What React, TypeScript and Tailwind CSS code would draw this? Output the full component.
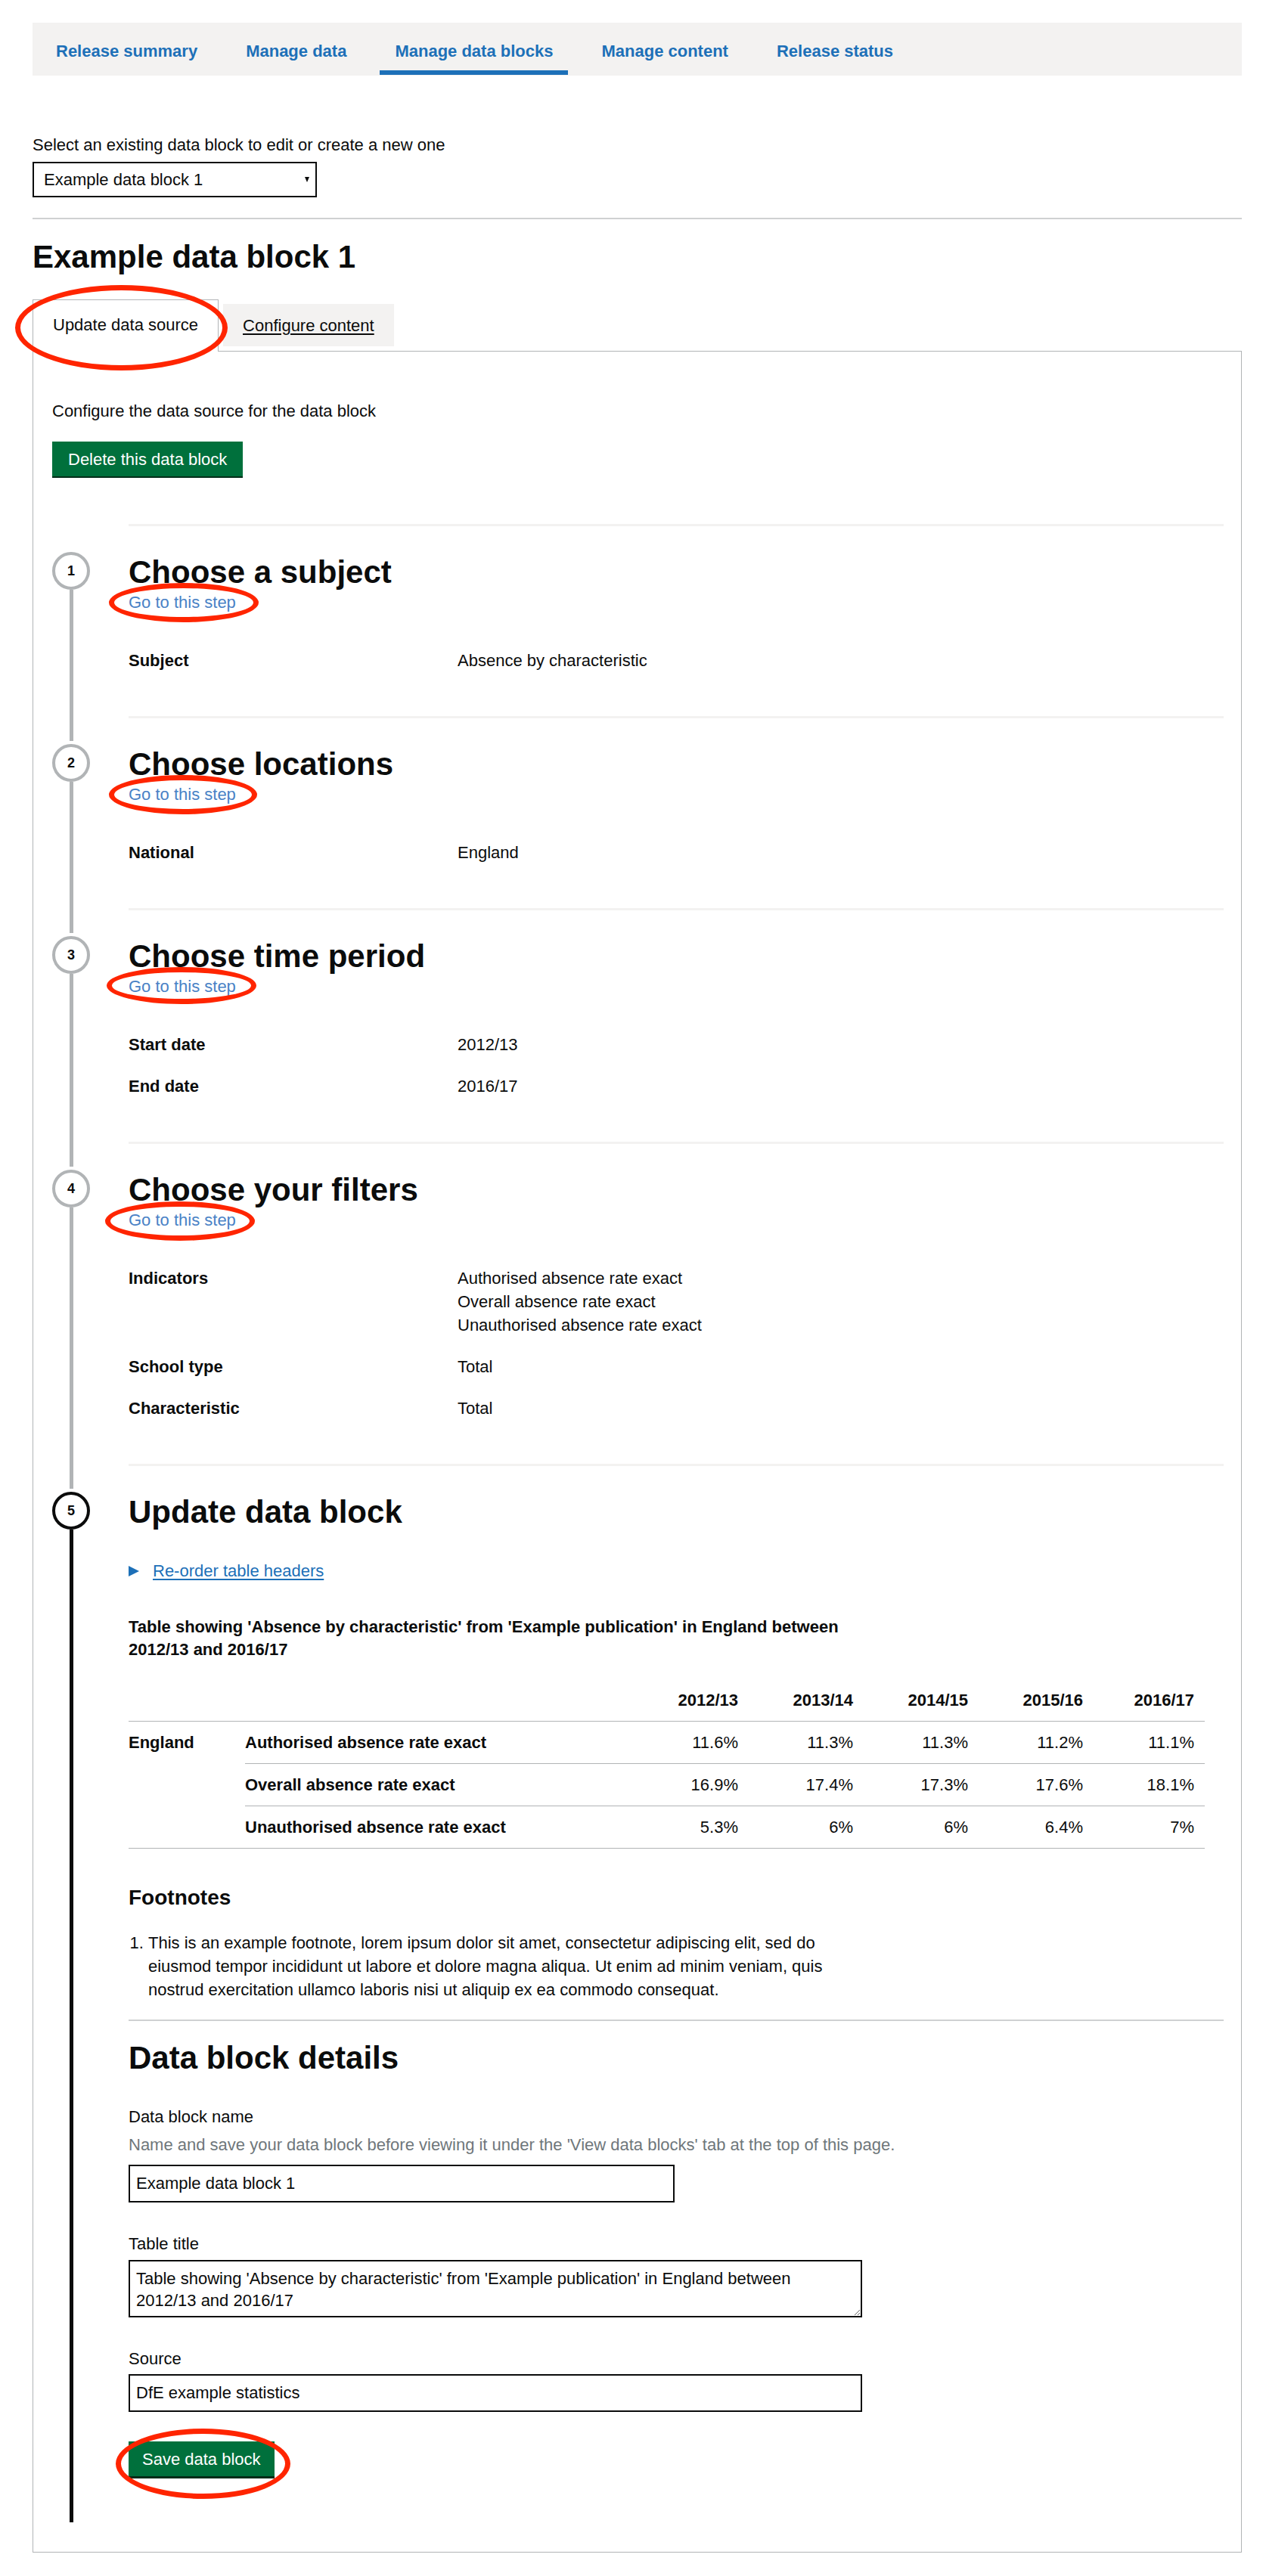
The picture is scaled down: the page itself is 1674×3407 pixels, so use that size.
import React from "react";

interface Row {
  label: string;
  values: string[];
}

interface Step {
  n: number;
  title: string;
  rows: Row[];
  ring: string;
}

const navItems = ["Release summary", "Manage data", "Manage data blocks", "Manage content", "Release status"];

const steps: Step[] = [
  {
    n: 1,
    title: "Choose a subject",
    rows: [{ label: "Subject", values: ["Absence by characteristic"] }],
    ring: "-left-[26px] -right-[30px] -top-[11px] -bottom-[12px]",
  },
  {
    n: 2,
    title: "Choose locations",
    rows: [{ label: "National", values: ["England"] }],
    ring: "-left-[26px] -right-[28px] -top-[11px] -bottom-[12px]",
  },
  {
    n: 3,
    title: "Choose time period",
    rows: [
      { label: "Start date", values: ["2012/13"] },
      { label: "End date", values: ["2016/17"] },
    ],
    ring: "-left-[29px] -right-[27px] -top-[11px] -bottom-[9px]",
  },
  {
    n: 4,
    title: "Choose your filters",
    rows: [
      {
        label: "Indicators",
        values: ["Authorised absence rate exact", "Overall absence rate exact", "Unauthorised absence rate exact"],
      },
      { label: "School type", values: ["Total"] },
      { label: "Characteristic", values: ["Total"] },
    ],
    ring: "-left-[31px] -right-[25px] -top-[10px] -bottom-[13px]",
  },
];

const years = ["2012/13", "2013/14", "2014/15", "2015/16", "2016/17"];

const tableRows = [
  { label: "Authorised absence rate exact", values: ["11.6%", "11.3%", "11.3%", "11.2%", "11.1%"] },
  { label: "Overall absence rate exact", values: ["16.9%", "17.4%", "17.3%", "17.6%", "18.1%"] },
  { label: "Unauthorised absence rate exact", values: ["5.3%", "6%", "6%", "6.4%", "7%"] },
];

const tableTitle =
  "Table showing 'Absence by characteristic' from 'Example publication' in England between 2012/13 and 2016/17";

function Ring({ className }: { className: string }) {
  // red annotation ellipse drawn over the screenshot
  return (
    <span
      className={`pointer-events-none absolute rounded-[50%] border-[7px] border-[#ff2500] ${className}`}
    />
  );
}

function StepRail({ n, first, active }: { n: number; first: boolean; active: boolean }) {
  return (
    <div className="flex w-[50px] shrink-0 flex-col items-center">
      <div className={`h-[33px] w-[5px] ${first ? "" : "bg-[#b1b4b6]"}`} />
      <div className="h-[4px]" />
      <div
        className={`flex h-[50px] w-[50px] items-center justify-center rounded-full border-4 bg-white text-[18px] font-bold ${
          active ? "border-[#0b0c0c]" : "border-[#b1b4b6]"
        }`}
      >
        {n}
      </div>
      <div className={`w-[5px] flex-1 ${active ? "bg-[#0b0c0c]" : "bg-[#b1b4b6]"}`} />
    </div>
  );
}

function SummaryStep({ step }: { step: Step }) {
  return (
    <li className="flex">
      <StepRail n={step.n} first={step.n === 1} active={false} />
      <div className="ml-[51px] flex-1 border-t-[3px] border-[#f3f2f1] pt-[38px] pb-[58px]">
        <h2 className="text-[42px] leading-[46px] font-bold">{step.title}</h2>
        <div className="mt-[2px]">
          <span className="relative inline-block text-[22px] leading-[29px] text-[#4a82c6]">
            Go to this step
            <Ring className={step.ring} />
          </span>
        </div>
        <dl className="mt-[47px] flex flex-col gap-[24px] text-[22px] leading-[31px]">
          {step.rows.map((row) => (
            <div key={row.label} className="grid grid-cols-[435px_1fr]">
              <dt className="font-bold">{row.label}</dt>
              <dd>
                {row.values.map((v) => (
                  <div key={v}>{v}</div>
                ))}
              </dd>
            </div>
          ))}
        </dl>
      </div>
    </li>
  );
}

export default function App() {
  return (
    <div className="min-h-[3407px] bg-white pt-[30px] pr-[32px] pb-[27px] pl-[43px] font-['Liberation_Sans',Arial,sans-serif] text-[#0b0c0c]">
      {/* release navigation */}
      <nav className="flex h-[70px] gap-[24px] bg-[#f3f2f1] pl-[11px]">
        {navItems.map((item) => (
          <a
            key={item}
            href="#"
            className={`flex h-[69px] items-center border-b-[6px] px-[20px] pt-[11px] text-[22px] font-bold text-[#1d70b8] ${
              item === "Manage data blocks" ? "border-[#1d70b8]" : "border-transparent"
            }`}
          >
            {item}
          </a>
        ))}
      </nav>

      <label className="mt-[77px] block text-[22px] leading-[29px]">
        Select an existing data block to edit or create a new one
      </label>
      <div className="relative mt-[8px] w-[376px]">
        <select className="h-[47px] w-full appearance-none rounded-none border-2 border-[#0b0c0c] bg-white pl-[13px] text-[22px] text-[#0b0c0c]">
          <option>Example data block 1</option>
        </select>
        <svg
          className="pointer-events-none absolute top-[20px] right-[10px]"
          width="6"
          height="7"
          viewBox="0 0 6 7"
        >
          <polygon points="0,0 6,0 3,7" fill="#0b0c0c" />
        </svg>
      </div>

      <div className="mt-[27px] h-[2px] bg-[#cfd1d2]" />

      <h1 className="mt-[27px] text-[42px] leading-[46px] font-bold">Example data block 1</h1>

      {/* tabs */}
      <div className="mt-[33px] flex items-start gap-[6px]">
        <div className="relative z-10 -mb-px flex h-[69px] items-center border-x border-t border-[#b1b4b6] bg-white px-[26px] pb-[3px] text-[22px]">
          Update data source
          <Ring className="-left-[24px] -right-[13px] -top-[20px] -bottom-[25px]" />
        </div>
        <div className="mt-[6px] flex h-[56px] items-center bg-[#f3f2f1] px-[26px] text-[22px]">
          <a href="#" className="underline underline-offset-[3px]">
            Configure content
          </a>
        </div>
      </div>

      <div className="border border-[#b1b4b6] pt-[64px] pr-[23px] pb-[39px] pl-[25px]">
        <p className="text-[22px] leading-[29px]">Configure the data source for the data block</p>
        <button
          type="button"
          className="mt-[26px] h-[46px] bg-[#00703c] px-[21px] text-[22px] text-white shadow-[0_2px_0_#002d18]"
        >
          Delete this data block
        </button>

        <ol className="mt-[63px]">
          {steps.map((step) => (
            <SummaryStep key={step.n} step={step} />
          ))}

          {/* step 5 */}
          <li className="flex">
            <StepRail n={5} first={false} active />
            <div className="ml-[51px] min-w-0 flex-1 border-t-[3px] border-[#f3f2f1] pt-[38px] pb-[61px]">
              <h2 className="text-[42px] leading-[46px] font-bold">Update data block</h2>

              <div className="mt-[40px] flex items-center gap-[18px] text-[22px] leading-[29px] text-[#1d70b8]">
                <svg width="14" height="14" viewBox="0 0 14 14">
                  <polygon points="0,0 14,7 0,14" fill="#1d70b8" />
                </svg>
                <a href="#" className="underline underline-offset-[3px]">
                  Re-order table headers
                </a>
              </div>

              <p className="mt-[45px] max-w-[965px] text-[22px] leading-[30px] font-bold">{tableTitle}</p>

              <table className="mt-[24px] w-[1423px] table-fixed border-collapse text-[22px] leading-[29px]">
                <colgroup>
                  <col className="w-[154px]" />
                  <col />
                  <col className="w-[152px]" />
                  <col className="w-[152px]" />
                  <col className="w-[152px]" />
                  <col className="w-[152px]" />
                  <col className="w-[148px]" />
                </colgroup>
                <thead>
                  <tr className="border-b border-[#b1b4b6]">
                    <th className="py-[13px]" />
                    <th className="py-[13px]" />
                    {years.map((y, i) => (
                      <th
                        key={y}
                        className={`py-[13px] text-right font-bold ${i === 4 ? "pr-[14px]" : "pr-[13px]"}`}
                      >
                        {y}
                      </th>
                    ))}
                  </tr>
                </thead>
                <tbody>
                  {tableRows.map((row, r) => (
                    <tr key={row.label} className="border-b border-[#b1b4b6]">
                      {r === 0 && (
                        <th rowSpan={3} className="py-[13px] text-left align-top font-bold">
                          England
                        </th>
                      )}
                      <th className="py-[13px] text-left font-bold">{row.label}</th>
                      {row.values.map((v, i) => (
                        <td key={i} className={`py-[13px] text-right ${i === 4 ? "pr-[14px]" : "pr-[13px]"}`}>
                          {v}
                        </td>
                      ))}
                    </tr>
                  ))}
                </tbody>
              </table>

              <h3 className="mt-[48px] text-[28px] leading-[34px] font-bold">Footnotes</h3>
              <ol className="mt-[27px] max-w-[965px] list-decimal pl-[26px] text-[22px] leading-[31px]">
                <li>
                  This is an example footnote, lorem ipsum dolor sit amet, consectetur adipiscing elit, sed do
                  eiusmod tempor incididunt ut labore et dolore magna aliqua. Ut enim ad minim veniam, quis nostrud
                  exercitation ullamco laboris nisi ut aliquip ex ea commodo consequat.
                </li>
              </ol>

              <div className="mt-[24px] h-[2px] bg-[#cfd1d2]" />

              <h2 className="mt-[26px] text-[42px] leading-[46px] font-bold">Data block details</h2>

              <label className="mt-[40px] block text-[22px] leading-[29px]">Data block name</label>
              <p className="mt-[8px] text-[22px] leading-[29px] text-[#6f777b]">
                Name and save your data block before viewing it under the 'View data blocks' tab at the top of this
                page.
              </p>
              <input
                className="mt-[12px] block h-[50px] w-[722px] border-2 border-[#0b0c0c] px-[8px] text-[22px] text-[#0b0c0c]"
                defaultValue="Example data block 1"
              />

              <label className="mt-[40px] block text-[22px] leading-[29px]">Table title</label>
              <textarea
                className="mt-[7px] block h-[76px] w-[970px] border-2 border-[#0b0c0c] px-[8px] pt-[8px] text-[22px] leading-[29px] text-[#0b0c0c]"
                defaultValue={tableTitle}
              />

              <label className="mt-[40px] block text-[22px] leading-[29px]">Source</label>
              <input
                className="mt-[6px] block h-[50px] w-[970px] border-2 border-[#0b0c0c] px-[8px] text-[22px] text-[#0b0c0c]"
                defaultValue="DfE example statistics"
              />

              <button
                type="button"
                className="relative mt-[39px] h-[46px] bg-[#00703c] px-[18px] text-[22px] text-white shadow-[0_3px_0_#002d18]"
              >
                Save data block
                <Ring className="-left-[17px] -right-[21px] -top-[17px] -bottom-[30px]" />
              </button>
            </div>
          </li>
        </ol>
      </div>
    </div>
  );
}
